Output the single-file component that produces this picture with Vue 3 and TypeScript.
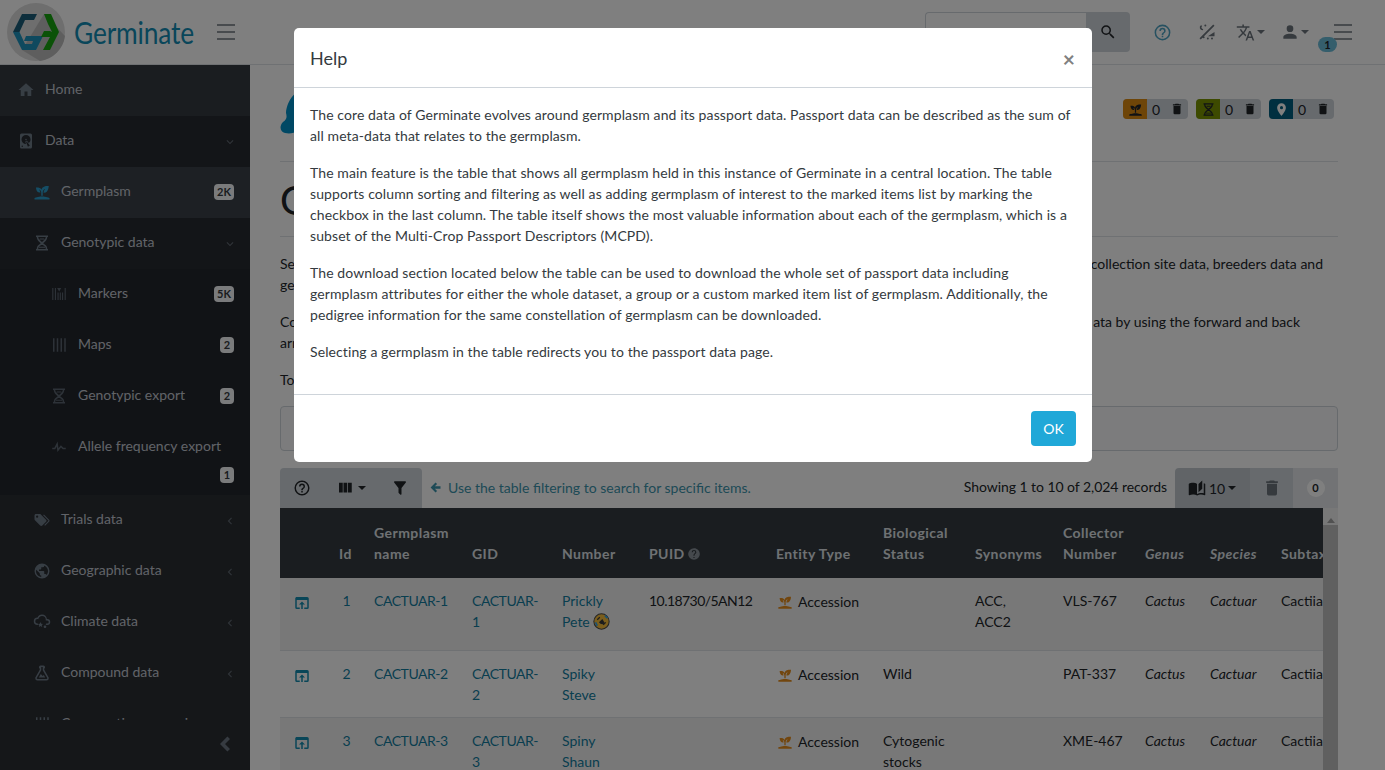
<script setup lang="ts">
const ICONS: Record<string, string> = {
  home: "M10,20V14H14V20H19V12H22L12,3L2,12H5V20H10Z",
  disk: "M6,2H18A2,2 0 0,1 20,4V20A2,2 0 0,1 18,22H6A2,2 0 0,1 4,20V4A2,2 0 0,1 6,2M12,4A6,6 0 0,0 6,10C6,13.31 8.69,16 12.1,16L11.22,13.77C10.95,13.29 11.11,12.68 11.59,12.4L12.45,11.9C12.93,11.63 13.54,11.79 13.82,12.27L15.74,14.69C17.12,13.59 18,11.9 18,10A6,6 0 0,0 12,4M12,9A1,1 0 0,1 13,10A1,1 0 0,1 12,11A1,1 0 0,1 11,10A1,1 0 0,1 12,9M7,18A1,1 0 0,0 6,19A1,1 0 0,0 7,20A1,1 0 0,0 8,19A1,1 0 0,0 7,18M12.09,13.27L14.58,19.58L17.17,18.08L12.95,12.77L12.09,13.27Z",
  sprout: "M2,22V20C2,20 7,18 12,18C17,18 22,20 22,20V22H2M11.3,9.1C10.1,5.2 4,6.1 4,6.1C4,6.1 4.2,13.9 9.9,12.7C9.5,9.8 8,9 8,9C10.8,9 11,12.4 11,12.4V17C11.3,17 11.7,17 12,17C12.3,17 12.7,17 13,17V12.8C13,12.8 13,8.9 16,7.9C16,7.9 14,10.9 14,12.9C21,13.6 21,4 21,4C21,4 12.1,3 11.3,9.1Z",
  hourglass: "M4,2H20V4H4ZM4,20H20V22H4ZM5,4H7C7,7 11,10 17,15C18.4,16.5 19,18 19,20H17C17,18 16.2,17 15,16C10,12 5,9 5,4ZM17,4H19C19,9 14,12 9,16C7.8,17 7,18 7,20H5C5,18 5.6,16.5 7,15C13,10 17,7 17,4ZM8,17H16V18.4H8ZM9,6H15V7.4H9Z",
  markers: "M3,4H4.5V20H3ZM6.5,4H8V20H6.5ZM10,10H11.5V20H10ZM13,10H14.5V20H13ZM16,10H17.5V20H16ZM19.5,4H21V20H19.5ZM9.5,4H15L12.2,8.5Z",
  maps: "M4,3H6V21H4ZM9,3H11V21H9ZM14,3H16V21H14ZM19,3H21V21H19Z",
  pulse: "M3,13H5.79L10.1,4.79L11.28,13.75L14.5,9.66L17.83,13H21V15H17L14.67,12.67L9.92,18.73L8.94,11.31L7,15H3V13Z",
  tags: "M5.5,9A1.5,1.5 0 0,0 7,7.5A1.5,1.5 0 0,0 5.5,6A1.5,1.5 0 0,0 4,7.5A1.5,1.5 0 0,0 5.5,9M17.41,11.58C17.77,11.94 18,12.44 18,13C18,13.55 17.78,14.05 17.41,14.41L12.41,19.41C12.05,19.77 11.55,20 11,20C10.45,20 9.95,19.78 9.58,19.41L2.59,12.42C2.22,12.05 2,11.55 2,11V6C2,4.89 2.89,4 4,4H9C9.55,4 10.05,4.22 10.41,4.58L17.41,11.58M13.54,5.71L14.54,4.71L21.41,11.58C21.78,11.94 22,12.45 22,13C22,13.55 21.78,14.05 21.42,14.41L16.04,19.79L15.04,18.79L20.75,13L13.54,5.71Z",
  earth: "M17.9,17.39C17.64,16.59 16.89,16 16,16H15V13A1,1 0 0,0 14,12H8V10H10A1,1 0 0,0 11,9V7H13A2,2 0 0,0 15,5V4.59C17.93,5.77 20,8.64 20,12C20,14.08 19.2,15.97 17.9,17.39M11,19.93C7.05,19.44 4,16.08 4,12C4,11.38 4.08,10.78 4.21,10.21L9,15V16A2,2 0 0,0 11,18M12,2A10,10 0 0,0 2,12A10,10 0 0,0 12,22A10,10 0 0,0 22,12A10,10 0 0,0 12,2Z",
  cloud: "M6,14A1,1 0 0,1 7,15A1,1 0 0,1 6,16A5,5 0 0,1 1,11A5,5 0 0,1 6,6C7,3.65 9.3,2 12,2C15.43,2 18.24,4.66 18.5,8.03L19,8A4,4 0 0,1 23,12A4,4 0 0,1 19,16H18A1,1 0 0,1 17,15A1,1 0 0,1 18,14H19A2,2 0 0,0 21,12A2,2 0 0,0 19,10H17V9A5,5 0 0,0 12,4C9.5,4 7.45,5.82 7.06,8.19C6.73,8.07 6.37,8 6,8A3,3 0 0,0 3,11A3,3 0 0,0 6,14ZM10,12L11,14.2L13.4,14.5L11.7,16.1L12.2,18.5L10,17.3L7.8,18.5L8.3,16.1L6.6,14.5L9,14.2ZM16,16.5A1.8,1.8 0 1,1 16,20.1A1.8,1.8 0 1,1 16,16.5Z",
  flask: "M5,19A1,1 0 0,0 6,20H18A1,1 0 0,0 19,19C19,18.79 18.93,18.59 18.82,18.43L13,8.35V4H11V8.35L5.18,18.43C5.07,18.59 5,18.79 5,19M6,22A3,3 0 0,1 3,19C3,18.4 3.18,17.84 3.5,17.37L9,7.81V6A1,1 0 0,1 8,5V4A2,2 0 0,1 10,2H14A2,2 0 0,1 16,4V5A1,1 0 0,1 15,6V7.81L20.5,17.37C20.82,17.84 21,18.4 21,19A3,3 0 0,1 18,22H6M13,16L14.34,14.66L16.27,18H7.73L10.39,13.39L13,16Z",
  chevronDown: "M7.41,8.58L12,13.17L16.59,8.58L18,10L12,16L6,10L7.41,8.58Z",
  chevronLeft: "M15.41,16.58L10.83,12L15.41,7.41L14,6L8,12L14,18L15.41,16.58Z",
  menu: "M3,4.3H21V5.7H3ZM3,11.3H21V12.7H3ZM3,18.3H21V19.7H3Z",
  helpOutline: "M11,18H13V16H11V18M12,2A10,10 0 0,0 2,12A10,10 0 0,0 12,22A10,10 0 0,0 22,12A10,10 0 0,0 12,2M12,20C7.59,20 4,16.41 4,12C4,7.59 7.59,4 12,4C16.41,4 20,7.59 20,12C20,16.41 16.41,20 12,20M12,6A4,4 0 0,0 8,10H10A2,2 0 0,1 12,8A2,2 0 0,1 14,10C14,12 11,11.75 11,15H13C13,12.75 16,12.5 16,10A4,4 0 0,0 12,6Z",
  help: "M15.07,11.25L14.17,12.17C13.45,12.89 13,13.5 13,15H11V14.5C11,13.39 11.45,12.39 12.17,11.67L13.41,10.41C13.78,10.05 14,9.55 14,9C14,7.89 13.1,7 12,7A2,2 0 0,0 10,9H8A4,4 0 0,1 12,5A4,4 0 0,1 16,9C16,9.88 15.64,10.67 15.07,11.25M13,19H11V17H13M12,2A10,10 0 0,0 2,12A10,10 0 0,0 12,22A10,10 0 0,0 22,12C22,6.47 17.5,2 12,2Z",
  magnify: "M9.5,3A6.5,6.5 0 0,1 16,9.5C16,11.11 15.41,12.59 14.44,13.73L14.71,14H15.5L20.5,19L19,20.5L14,15.5V14.71L13.73,14.44C12.59,15.41 11.11,16 9.5,16A6.5,6.5 0 0,1 3,9.5A6.5,6.5 0 0,1 9.5,3M9.5,5C7,5 5,7 5,9.5C5,12 7,14 9.5,14C12,14 14,12 14,9.5C14,7 12,5 9.5,5Z",
  theme: "M19.5,3L21,4.5L4.5,21L3,19.5ZM21,12V17H13ZM5,3.5A3.5,3.5 0 0,0 7,10L7.5,8.5A2,2 0 0,1 6,5ZM8,17A1.2,1.2 0 1,1 8,19.4A1.2,1.2 0 1,1 8,17ZM13,18.5A1.2,1.2 0 1,1 13,20.9A1.2,1.2 0 1,1 13,18.5ZM18,18.5A1.2,1.2 0 1,1 18,20.9A1.2,1.2 0 1,1 18,18.5ZM10,3A1.2,1.2 0 1,1 10,5.4A1.2,1.2 0 1,1 10,3Z",
  translate: "M12.87,15.07L10.33,12.56L10.36,12.53C12.1,10.59 13.34,8.36 14.07,6H17V4H10V2H8V4H1V6H12.17C11.5,7.92 10.44,9.75 9,11.35C8.07,10.32 7.3,9.19 6.69,8H4.69C5.42,9.63 6.42,11.17 7.67,12.56L2.58,17.58L4,19L9,14L12.11,17.11L12.87,15.07M18.5,10H16.5L12,22H14L15.12,19H19.87L21,22H23L18.5,10M15.88,17L17.5,12.67L19.12,17H15.88Z",
  account: "M12,4A4,4 0 0,1 16,8A4,4 0 0,1 12,12A4,4 0 0,1 8,8A4,4 0 0,1 12,4M12,14C16.42,14 20,15.79 20,18V20H4V18C4,15.79 7.58,14 12,14Z",
  trash: "M19,4H15.5L14.5,3H9.5L8.5,4H5V6H19M6,19A2,2 0 0,0 8,21H16A2,2 0 0,0 18,19V7H6V19Z",
  marker: "M12,11.5A2.5,2.5 0 0,1 9.5,9A2.5,2.5 0 0,1 12,6.5A2.5,2.5 0 0,1 14.5,9A2.5,2.5 0 0,1 12,11.5M12,2A7,7 0 0,0 5,9C5,14.25 12,22 12,22C12,22 19,14.25 19,9A7,7 0 0,0 12,2Z",
  filter: "M14,12V19.88C14.04,20.18 13.94,20.5 13.71,20.71C13.32,21.1 12.69,21.1 12.3,20.71L10.29,18.7C10.06,18.47 9.96,18.16 10,17.87V12H9.97L4.21,4.62C3.87,4.19 3.95,3.56 4.38,3.22C4.57,3.08 4.78,3 5,3V3H19V3C19.22,3 19.43,3.08 19.62,3.22C20.05,3.56 20.13,4.19 19.79,4.62L14.03,12H14Z",
  columns: "M16,5V18H21V5M4,18H9V5H4M10,18H15V5H10V18Z",
  book: "M19 2L14 6.5V17.5L19 13V2M6.5 5C4.55 5 2.45 5.4 1 6.5V21.16C1 21.41 1.25 21.66 1.5 21.66C1.6 21.66 1.65 21.59 1.75 21.59C3.1 20.94 5.05 20.5 6.5 20.5C8.45 20.5 10.55 20.9 12 22C13.35 21.15 15.8 20.5 17.5 20.5C19.15 20.5 20.85 20.81 22.25 21.56C22.35 21.61 22.4 21.59 22.5 21.59C22.75 21.59 23 21.34 23 21.09V6.5C22.4 6.05 21.75 5.75 21 5.5V19C19.9 18.65 18.7 18.5 17.5 18.5C15.8 18.5 13.35 19.15 12 20V6.5C10.55 5.4 8.45 5 6.5 5Z",
  arrowLeft: "M20,10V14H11L14.5,17.5L12.08,19.92L4.16,12L12.08,4.08L14.5,6.5L11,10H20Z",
  openIn: "M12,10L8,14H11V20H13V14H16M19,4H5C3.89,4 3,4.9 3,6V18A2,2 0 0,0 5,20H9V18H5V8H19V18H15V20H19A2,2 0 0,0 21,18V6A2,2 0 0,0 19,4Z",
};

type NavItem = {
  label: string;
  icon: string;
  level: "top" | "open" | "active" | "sub" | "leaf" | "closed";
  badge?: string;
  chevron?: "chevronDown" | "chevronLeft";
  wrapBadge?: boolean;
};

const navItems: NavItem[] = [
  { label: "Home", icon: "home", level: "top" },
  { label: "Data", icon: "disk", level: "open", chevron: "chevronDown" },
  { label: "Germplasm", icon: "sprout", level: "active", badge: "2K" },
  { label: "Genotypic data", icon: "hourglass", level: "sub", chevron: "chevronDown" },
  { label: "Markers", icon: "markers", level: "leaf", badge: "5K" },
  { label: "Maps", icon: "maps", level: "leaf", badge: "2" },
  { label: "Genotypic export", icon: "hourglass", level: "leaf", badge: "2" },
  { label: "Allele frequency export", icon: "pulse", level: "leaf", badge: "1", wrapBadge: true },
  { label: "Trials data", icon: "tags", level: "closed", chevron: "chevronLeft" },
  { label: "Geographic data", icon: "earth", level: "closed", chevron: "chevronLeft" },
  { label: "Climate data", icon: "cloud", level: "closed", chevron: "chevronLeft" },
  { label: "Compound data", icon: "flask", level: "closed", chevron: "chevronLeft" },
  { label: "Comparative genomics", icon: "maps", level: "closed", chevron: "chevronLeft" },
];

const marked = [
  { icon: "sprout", tone: "orange" },
  { icon: "hourglass", tone: "olive" },
  { icon: "marker", tone: "teal" },
];

const rows = [
  { id: 1, name: "CACTUAR-1", gid: "CACTUAR-1", number: "Prickly Pete", puid: "10.18730/5AN12", status: "", syn: "ACC, ACC2", coll: "VLS-767", emoji: true },
  { id: 2, name: "CACTUAR-2", gid: "CACTUAR-2", number: "Spiky Steve", puid: "", status: "Wild", syn: "", coll: "PAT-337", emoji: false },
  { id: 3, name: "CACTUAR-3", gid: "CACTUAR-3", number: "Spiny Shaun", puid: "", status: "Cytogenic stocks", syn: "", coll: "XME-467", emoji: false },
];

const helpParagraphs = [
  "The core data of Germinate evolves around germplasm and its passport data. Passport data can be described as the sum of all meta-data that relates to the germplasm.",
  "The main feature is the table that shows all germplasm held in this instance of Germinate in a central location. The table supports column sorting and filtering as well as adding germplasm of interest to the marked items list by marking the checkbox in the last column. The table itself shows the most valuable information about each of the germplasm, which is a subset of the Multi-Crop Passport Descriptors (MCPD).",
  "The download section located below the table can be used to download the whole set of passport data including germplasm attributes for either the whole dataset, a group or a custom marked item list of germplasm. Additionally, the pedigree information for the same constellation of germplasm can be downloaded.",
  "Selecting a germplasm in the table redirects you to the passport data page.",
];
</script>

<template>
  <div class="page">
    <header class="navbar">
      <div class="logo-mark">
        <svg viewBox="6 2 60 60" width="60" height="60">
          <circle cx="36" cy="32" r="29" fill="#dcdcdc" />
          <path d="M44 14L65 36A29 29 0 0 1 40 61L22 50Z" fill="#bdbdbd" />
          <path d="M13 32L22 14H37L34 20H25L19.5 32Z" fill="#1b5d78" />
          <path d="M13 32L22 50H36L43 36H26L24 41H33L32 44H25L19.5 32Z" fill="#1f93bd" />
          <path d="M44 14H51L59 32L50 50H43L50 37H41L44 31H50L52 32L48 24Z" fill="#16a50f" />
        </svg>
      </div>
      <span class="brand">Germinate</span>
      <svg class="ic nav-toggle" viewBox="0 0 24 24"><path :d="ICONS.menu" /></svg>

      <div class="nav-right">
        <div class="search">
          <span class="search-input">Search</span>
          <span class="search-btn"><svg class="ic" viewBox="0 0 24 24"><path :d="ICONS.magnify" /></svg></span>
        </div>
        <svg class="ic nav-ic help-ic" viewBox="0 0 24 24"><path :d="ICONS.helpOutline" /></svg>
        <svg class="ic nav-ic theme-ic" viewBox="0 0 24 24"><path :d="ICONS.theme" /></svg>
        <span class="nav-drop lang">
          <svg class="ic nav-ic" viewBox="0 0 24 24"><path :d="ICONS.translate" /></svg>
          <i class="caret" />
        </span>
        <span class="nav-drop user">
          <svg class="ic nav-ic" viewBox="0 0 24 24"><path :d="ICONS.account" /></svg>
          <i class="caret" />
        </span>
        <span class="aside-toggle">
          <svg class="ic" viewBox="0 0 24 24"><path :d="ICONS.menu" /></svg>
          <span class="aside-count">1</span>
        </span>
      </div>
    </header>

    <div class="body-row">
      <aside class="sidebar">
        <nav class="side-scroll">
          <a v-for="item in navItems" :key="item.label" class="side-item" :class="[item.level, { wrapped: item.wrapBadge }]">
            <svg class="ic side-ic" viewBox="0 0 24 24"><path :d="ICONS[item.icon]" /></svg>
            <span class="side-label">{{ item.label }}</span>
            <span v-if="item.wrapBadge" class="side-break" />
            <span v-if="item.badge" class="side-badge">{{ item.badge }}</span>
            <svg v-if="item.chevron" class="ic side-chev" viewBox="0 0 24 24"><path :d="ICONS[item.chevron]" /></svg>
          </a>
        </nav>
        <div class="side-foot">
          <svg class="ic" viewBox="0 0 24 24"><path d="M15.4,4.4L8,12L15.4,19.6L18,17L13,12L18,7Z" /></svg>
        </div>
      </aside>

      <main class="content">
        <div class="page-head">
          <svg class="blob" viewBox="0 0 40 44" width="40" height="44">
            <path d="M40 0H16C10 4 6 14 6 20C7 24 7 26 3 29C-1 33 0 39 5 40C10 41 14 40 18 38H40Z" fill="#0090c8" />
          </svg>
          <div class="marked-list">
            <span v-for="m in marked" :key="m.tone" class="marked">
              <span class="marked-ic" :class="m.tone"><svg class="ic" viewBox="0 0 24 24"><path :d="ICONS[m.icon]" /></svg></span>
              <span class="marked-num">0</span>
              <svg class="ic marked-del" viewBox="0 0 24 24"><path :d="ICONS.trash" /></svg>
            </span>
          </div>
        </div>

        <h1 class="title">Germplasm</h1>

        <p class="intro">
          <span class="intro-line"><span>See the germplasm held in this database along with its passport data, images,</span><span class="tail">collection site data, breeders data and</span></span>
          <span class="intro-line"><span>genotypic data.</span></span>
        </p>
        <p class="intro">
          <span class="intro-line"><span>Columns can be sorted and filtered, and you can move through the data</span><span class="tail tail2">ata by using the forward and back</span></span>
          <span class="intro-line"><span>arrows.</span></span>
        </p>
        <p class="intro">To find a germplasm, use the filtering.</p>

        <div class="collapse-box" />

        <div class="toolbar">
          <div class="tool-left">
            <svg class="ic tool-help" viewBox="0 0 24 24"><path :d="ICONS.helpOutline" /></svg>
            <span class="tool-cols">
              <svg class="ic" viewBox="0 0 24 24"><path :d="ICONS.columns" /></svg>
              <i class="caret" />
            </span>
            <svg class="ic tool-filter" viewBox="0 0 24 24"><path :d="ICONS.filter" /></svg>
          </div>
          <div class="tool-hint">
            <svg class="ic" viewBox="0 0 24 24"><path :d="ICONS.arrowLeft" /></svg>
            Use the table filtering to search for specific items.
          </div>
          <div class="tool-count">Showing 1 to 10 of 2,024 records</div>
          <div class="tool-right">
            <span class="per-page">
              <svg class="ic" viewBox="0 0 24 24"><path :d="ICONS.book" /></svg>
              10
              <i class="caret" />
            </span>
            <span class="bin"><svg class="ic" viewBox="0 0 24 24"><path :d="ICONS.trash" /></svg></span>
            <span class="count-wrap"><span class="count-pill">0</span></span>
          </div>
        </div>

        <div class="table-row">
          <div class="table-clip">
            <table class="grid">
              <colgroup>
                <col style="width: 47px" /><col style="width: 35px" /><col style="width: 98px" /><col style="width: 90px" />
                <col style="width: 87px" /><col style="width: 127px" /><col style="width: 107px" /><col style="width: 92px" />
                <col style="width: 88px" /><col style="width: 82px" /><col style="width: 65px" /><col style="width: 71px" /><col style="width: 80px" />
              </colgroup>
              <thead>
                <tr>
                  <th />
                  <th>Id</th>
                  <th>Germplasm name</th>
                  <th>GID</th>
                  <th>Number</th>
                  <th>PUID <svg class="ic th-help" viewBox="0 0 24 24"><path :d="ICONS.help" /></svg></th>
                  <th>Entity Type</th>
                  <th>Biological Status</th>
                  <th>Synonyms</th>
                  <th>Collector Number</th>
                  <th><em>Genus</em></th>
                  <th><em>Species</em></th>
                  <th class="nowrap">Subtaxa</th>
                </tr>
              </thead>
              <tbody>
                <tr v-for="row in rows" :key="row.id" :class="{ first: row.id === 1, odd: row.id % 2 === 1 }">
                  <td class="open-cell"><svg class="ic" viewBox="0 0 24 24"><path :d="ICONS.openIn" /></svg></td>
                  <td class="link id-cell">{{ row.id }}</td>
                  <td class="link caps nowrap">{{ row.name }}</td>
                  <td class="link caps">{{ row.gid }}</td>
                  <td class="link">
                    {{ row.number }}
                    <svg v-if="row.emoji" class="emoji" viewBox="0 0 20 20" width="17" height="17">
                      <circle cx="10" cy="10" r="9" fill="#f7bd3a" stroke="#4a4a4a" stroke-width="1.2" />
                      <path d="M5 8L8 5M12 14L15 11" stroke="#3a3a3a" stroke-width="1.5" />
                      <path d="M7 11L11 7L14 12Q10 15 7 11Z" fill="#3a3a3a" />
                      <path d="M3 11L5 15M14 3L17 6" stroke="#35a5ea" stroke-width="2" />
                    </svg>
                  </td>
                  <td class="puid nowrap">{{ row.puid }}</td>
                  <td class="entity"><svg class="ic" viewBox="0 0 24 24"><path :d="ICONS.sprout" /></svg>Accession</td>
                  <td>{{ row.status }}</td>
                  <td>{{ row.syn }}</td>
                  <td class="nowrap">{{ row.coll }}</td>
                  <td><em>Cactus</em></td>
                  <td><em>Cactuar</em></td>
                  <td class="nowrap">Cactiiae</td>
                </tr>
              </tbody>
            </table>
          </div>
          <div class="scrollbar">
            <i class="scroll-up" />
            <i class="scroll-thumb" />
          </div>
        </div>
      </main>
    </div>

    <div class="backdrop" />
    <section class="modal" role="dialog">
      <header class="modal-head">
        <h5>Help</h5>
        <span class="close">×</span>
      </header>
      <div class="modal-body">
        <p v-for="text in helpParagraphs" :key="text">{{ text }}</p>
      </div>
      <footer class="modal-foot">
        <button class="ok" type="button">OK</button>
      </footer>
    </section>
  </div>
</template>

<style>
html,
body {
  margin: 0;
  height: 100%;
  overflow: hidden;
}
</style>

<style scoped>
.page {
  --link: #127d9f;
  height: 770px;
  overflow: hidden;
  display: flex;
  flex-direction: column;
  background: #fff;
  color: #212529;
  font: 14px/21px "Lato", "Open Sans", sans-serif;
}

.ic {
  display: inline-block;
  width: 18px;
  height: 18px;
  fill: currentColor;
  flex: none;
}

.caret {
  display: inline-block;
  border-top: 4px solid currentColor;
  border-left: 4px solid transparent;
  border-right: 4px solid transparent;
}

/* top bar */
.navbar {
  height: 64px;
  flex: none;
  display: flex;
  align-items: center;
  border-bottom: 1px solid #dee2e6;
  padding-left: 6px;
  box-sizing: content-box;
}

.logo-mark {
  width: 60px;
  height: 60px;
  flex: none;
  overflow: hidden;
}

.brand {
  display: inline-block;
  width: 120px;
  margin-left: 8px;
  font-size: 31px;
  line-height: 40px;
  color: #138db5;
  letter-spacing: -0.2px;
  white-space: nowrap;
  transform: scaleX(0.85);
  transform-origin: left center;
}

.nav-toggle {
  width: 24px;
  height: 24px;
  margin-left: 20px;
  color: #6c757d;
}

.nav-right {
  margin-left: auto;
  display: flex;
  align-items: center;
  position: relative;
  height: 64px;
}

.search {
  display: flex;
  height: 40px;
  margin-right: 21px;
}

.search-input {
  width: 161px;
  box-sizing: border-box;
  border: 1px solid #ced4da;
  border-right: 0;
  border-radius: 4px 0 0 4px;
  padding: 9px 8px;
  color: #6c757d;
}

.search-btn {
  width: 44px;
  background: #ced4da;
  border-radius: 0 4px 4px 0;
  display: flex;
  align-items: center;
  justify-content: center;
  color: #212529;
}

.nav-ic {
  width: 20px;
  height: 20px;
  color: #6c757d;
}

.help-ic {
  width: 19px;
  height: 19px;
  color: #4fa3c2;
  margin-left: 2px;
  margin-right: 25px;
}

.theme-ic {
  margin-right: 19px;
  width: 20px;
  height: 20px;
}

.nav-drop {
  display: flex;
  align-items: center;
  color: #6c757d;
}

.lang {
  gap: 2px;
  margin-right: 15px;
}

.lang .nav-ic {
  width: 19px;
  height: 19px;
}

.user {
  gap: 1px;
  margin-right: 22px;
}

.aside-toggle {
  position: relative;
  width: 24px;
  height: 24px;
  margin-right: 30px;
  color: #6c757d;
}

.aside-toggle .ic {
  width: 24px;
  height: 24px;
}

.aside-count {
  position: absolute;
  left: -13px;
  top: 17px;
  width: 19px;
  height: 15px;
  border-radius: 8px;
  background: #6bbcd9;
  text-align: center;
  font-size: 11px;
  line-height: 15px;
  font-weight: 700;
  color: #212529;
}

/* sidebar */
.body-row {
  flex: 1;
  display: flex;
  min-height: 0;
}

.sidebar {
  width: 250px;
  flex: none;
  display: flex;
  flex-direction: column;
  background: #2a2e33;
  color: #c2c7d0;
}

.side-scroll {
  flex: 1;
  min-height: 0;
  overflow: hidden;
}

.side-item {
  display: flex;
  flex-wrap: wrap;
  align-items: center;
  padding: 13px 16px 17px 17px;
  background: #2a2e33;
}

.side-ic {
  width: 18px;
  height: 18px;
  margin-right: 10px;
  color: #6f7c89;
  position: relative;
  top: 1px;
}

.side-label {
  white-space: nowrap;
}

.side-break {
  flex-basis: 100%;
  height: 10px;
}

.side-badge {
  margin-left: auto;
  box-sizing: border-box;
  min-width: 14px;
  height: 16px;
  padding: 0 3px;
  text-align: center;
  border-radius: 4px;
  background: #f4f6f9;
  color: #343a40;
  font-size: 11px;
  line-height: 16px;
  font-weight: 700;
  position: relative;
  top: 1px;
}

.side-item.wrapped {
  padding-bottom: 13px;
}

.side-chev {
  margin-left: auto;
  width: 14px;
  height: 14px;
  margin-right: -3px;
  color: #5f6770;
  position: relative;
  top: 2px;
}

.top {
  background: #343a40;
}

.open,
.sub {
  background: #272a30;
}

.active {
  background: #3a4148;
}

.leaf {
  background: #22262c;
}

.active,
.sub,
.closed {
  padding-left: 33px;
}

.leaf {
  padding-left: 50px;
}

.active .side-ic {
  color: #2b9ccc;
}

.leaf .side-ic {
  color: #5b6570;
}

.side-foot {
  height: 50px;
  box-sizing: border-box;
  padding-bottom: 2px;
  flex: none;
  display: flex;
  align-items: center;
  justify-content: flex-end;
  padding-right: 14px;
  color: #6c7783;
}

.side-foot .ic {
  width: 24px;
  height: 24px;
}

/* page content */
.content {
  flex: 1;
  min-width: 0;
  overflow: hidden;
  padding: 0 47px 0 30px;
}

.page-head {
  height: 96px;
  display: flex;
  justify-content: space-between;
  align-items: flex-start;
  border-bottom: 1px solid #dee2e6;
}

.blob {
  margin-top: 28px;
}

.marked-list {
  display: flex;
  gap: 8px;
  margin-top: 34px;
  padding-right: 4px;
}

.marked {
  width: 65px;
  display: flex;
  align-items: center;
  height: 20px;
  border-radius: 4px;
  background: #ced4da;
  color: #212529;
  overflow: hidden;
  font-size: 14px;
}

.marked-ic {
  width: 24px;
  height: 20px;
  display: flex;
  align-items: center;
  justify-content: center;
}

.marked-ic .ic {
  width: 15px;
  height: 15px;
}

.orange {
  background: #dd8a10;
}

.olive {
  background: #7a9400;
}

.teal {
  background: #005f80;
  color: #fff;
}

.marked-num {
  width: 18px;
  text-align: center;
}

.marked-del {
  width: 14px;
  height: 14px;
  margin-left: 5px;
}

.title {
  margin: 0;
  height: 75px;
  box-sizing: border-box;
  padding-top: 14px;
  font-size: 40px;
  line-height: 48px;
  font-weight: 400;
  border-bottom: 1px solid #dee2e6;
}

.intro {
  margin: 16px 0 0;
  color: #212529;
}

.intro-line {
  display: flex;
  justify-content: space-between;
  white-space: nowrap;
  overflow: hidden;
}

.tail {
  padding-right: 15px;
}

.tail2 {
  padding-right: 38px;
}

.collapse-box {
  margin-top: 16px;
  height: 45px;
  box-sizing: border-box;
  border: 1px solid #ced4da;
  border-radius: 4px;
  background: #f8f9fa;
}

.toolbar {
  margin-top: 17px;
  height: 40px;
  display: flex;
  align-items: center;
}

.tool-left {
  width: 142px;
  height: 40px;
  flex: none;
  background: #ced4da;
  border-radius: 4px 4px 0 0;
  display: flex;
  align-items: center;
  color: #212529;
}

.tool-help {
  margin-left: 13px;
  width: 18px;
}

.tool-cols {
  display: flex;
  align-items: center;
  gap: 4px;
  margin-left: 25px;
}

.tool-filter {
  margin-left: 25px;
  width: 18px;
  height: 18px;
}

.tool-hint {
  margin-left: 6px;
  margin-bottom: 1px;
  color: #3d95ad;
  display: flex;
  align-items: center;
  gap: 5px;
}

.tool-hint .ic {
  width: 15px;
  height: 15px;
}

.tool-count {
  margin-left: auto;
  margin-right: 8px;
  margin-top: -3px;
  letter-spacing: -0.05px;
}

.tool-right {
  display: flex;
  height: 40px;
  color: #212529;
}

.per-page {
  width: 75px;
  box-sizing: border-box;
  padding-left: 13px;
  background: #c2c9cf;
  border-radius: 4px 0 0 0;
  display: flex;
  align-items: center;
  gap: 3px;
}

.bin {
  width: 43px;
  background: #ced4da;
  display: flex;
  align-items: center;
  justify-content: center;
  color: #6c757d;
}

.bin .ic {
  width: 20px;
  height: 20px;
}

.count-wrap {
  width: 45px;
  background: #e4e7ea;
  display: flex;
  align-items: center;
  justify-content: center;
}

.count-pill {
  width: 18px;
  height: 18px;
  border-radius: 9px;
  background: #fff;
  text-align: center;
  font-size: 11px;
  line-height: 18px;
  font-weight: 700;
}

.table-row {
  display: flex;
}

.table-clip {
  width: 1043px;
  overflow: hidden;
  flex: none;
}

.grid {
  width: 1069px;
  table-layout: fixed;
  border-collapse: collapse;
}

.grid th {
  height: 70px;
  box-sizing: border-box;
  padding: 12px 0 14px 12px;
  background: #343a40;
  color: #dee2e6;
  vertical-align: bottom;
  text-align: left;
  font-weight: 700;
  letter-spacing: 0.45px;
}

.th-help {
  width: 14px;
  height: 14px;
  margin-left: -2px;
  color: #8a939b;
  vertical-align: -2px;
}

.grid td {
  padding: 12px;
  vertical-align: top;
  border-bottom: 1px solid #dee2e6;
}

.nowrap {
  white-space: nowrap;
}

.odd td {
  background: #f1f1f1;
}

.first {
  height: 72px;
}

.link {
  color: var(--link);
}

.caps {
  letter-spacing: -0.45px;
}

.puid {
  letter-spacing: -0.55px;
}

.grid .id-cell {
  text-align: center;
  padding-left: 4px;
  padding-right: 0;
}

.grid .open-cell {
  color: #138cb0;
  padding: 16px 0 0 13px;
}

.open-cell .ic {
  display: block;
}

.grid .entity {
  white-space: nowrap;
  padding-top: 13px;
}

.entity .ic {
  width: 16px;
  height: 16px;
  color: #e58d1c;
  vertical-align: -3px;
  margin-left: 1px;
  margin-right: 5px;
}

.emoji {
  vertical-align: -3px;
}

.scrollbar {
  flex: 1;
  display: flex;
  flex-direction: column;
  align-items: center;
  background: #f1f1f1;
  height: 262px;
}

.scroll-up {
  margin-top: 6px;
  height: 9px;
  border-bottom: 5px solid #a3a3a3;
  border-left: 4px solid transparent;
  border-right: 4px solid transparent;
  box-sizing: border-box;
}

.scroll-thumb {
  width: 100%;
  flex: 1;
  background: #c1c1c1;
  margin-top: 2px;
}

/* overlay + dialog */
.backdrop {
  position: fixed;
  inset: 0;
  background: rgba(0, 0, 0, 0.5);
}

.modal {
  position: fixed;
  left: 294px;
  top: 28px;
  width: 798px;
  background: #fff;
  border-radius: 5px;
}

.modal-head {
  height: 60px;
  box-sizing: border-box;
  display: flex;
  align-items: center;
  justify-content: space-between;
  padding: 2px 16px 0;
  border-bottom: 1px solid #ced4da;
}

.modal-head h5 {
  margin: 0;
  font-size: 18px;
  line-height: 27px;
  font-weight: 400;
  color: #343a40;
}

.close {
  font-size: 21px;
  line-height: 21px;
  font-weight: 700;
  color: #808080;
  margin-right: 1px;
}

.modal-body {
  padding: 16px;
  letter-spacing: 0.1px;
}

.modal-body p {
  margin: 0 0 16px;
  color: #343a40;
}

.modal-foot {
  height: 68px;
  box-sizing: border-box;
  border-top: 1px solid #ced4da;
  display: flex;
  align-items: center;
  justify-content: flex-end;
  padding: 0 16px;
}

.ok {
  width: 45px;
  height: 35px;
  border: 0;
  border-radius: 4px;
  background: #20a8d8;
  color: #fff;
  font: inherit;
  padding: 0;
}
</style>
